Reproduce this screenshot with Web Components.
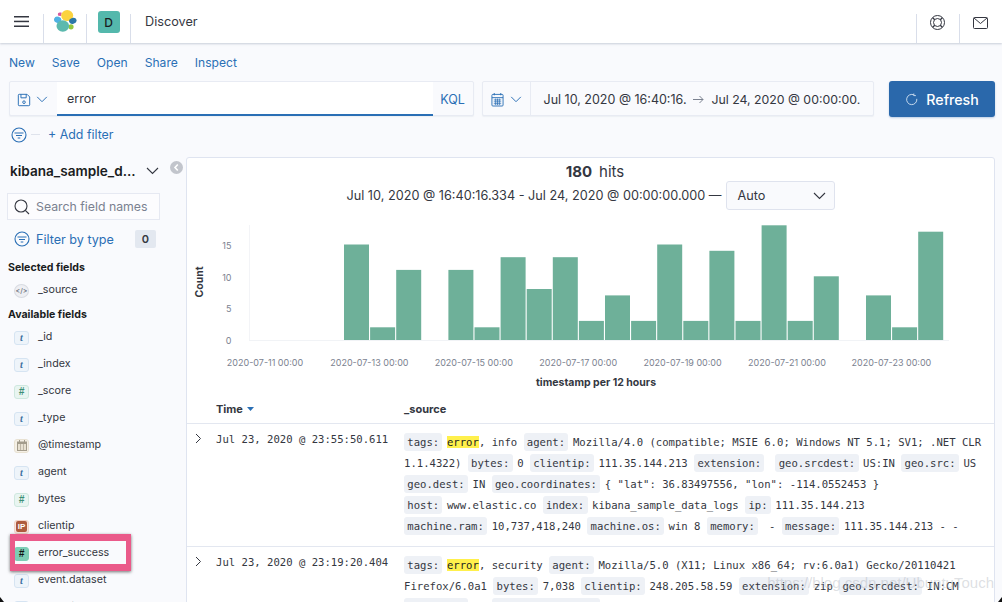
<!DOCTYPE html>
<html>
<head>
<meta charset="utf-8">
<style>
    html, body { margin: 0; height: 100%; overflow: hidden; background: #f9fafd; }
    body { font-family: Inter, "Liberation Sans", sans-serif; color: #343741; }
</style>
</head>
<body>
<kbn-app></kbn-app>

<script>
const ICONS = {
    save: '<svg width="14" height="14" viewBox="0 0 16 16" fill="none" stroke="#2a6fb5" stroke-width="1.100"><path d="M2.500 1.500h9l3 3v9a1 1 0 0 1-1 1h-11a1 1 0 0 1-1-1v-11a1 1 0 0 1 1-1z"/><path d="M4.500 1.500v4h6v-4"/><circle cx="8" cy="10.500" r="1.500"/></svg>',
    chevron: '<svg width="12" height="7" viewBox="0 0 13 8" fill="none" stroke="#2a6fb5" stroke-width="1.100"><path d="M1 1l5.500 5.500L12 1"/></svg>',
    chevronDark: '<svg width="13" height="8" viewBox="0 0 13 8" fill="none" stroke="#343741" stroke-width="1.100"><path d="M1 1l5.500 5.500L12 1"/></svg>',
    filter: '<svg width="16" height="16" viewBox="0 0 16 16" fill="none" stroke="#2a6fb5" stroke-width="1.100"><circle cx="8" cy="8" r="7"/><path d="M3.500 6h9M5 8.500h6M6.700 11h2.600"/></svg>',
    calendar: '<svg width="13" height="15" viewBox="0 0 14 16" fill="none" stroke="#2a6fb5"><rect x="1" y="2.500" width="12" height="12.500" rx="1"/><path d="M1 6h12M3.500 1v2.500M10.500 1v2.500"/><path d="M3 8.500h8M3 10.500h8M3 12.500h8M5 7v7M7 7v7M9 7v7" stroke-width=".8"/></svg>',
    refresh: '<svg width="13" height="13" viewBox="0 0 14 14" fill="none" stroke="#cfe0f0" stroke-width="1"><path d="M9.700 2.100a5.500 5.500 0 1 0 3 4.200"/><path d="M9.500 .6v2.200h2.200" /></svg>',
    search: '<svg width="16" height="16" viewBox="0 0 16 16" fill="none" stroke="#343741" stroke-width="1.100"><circle cx="7" cy="7" r="6"/><path d="M11.300 11.300L15 15"/></svg>',
    collapse: '<svg width="13" height="13" viewBox="0 0 13 13"><circle cx="6.500" cy="6.500" r="6.500" fill="#c2c5cc"/><path d="M7.800 3.500L5 6.500l2.800 3" fill="none" stroke="#fff" stroke-width="1.600"/></svg>',
    expand: '<svg width="7" height="11" viewBox="0 0 7 11" fill="none" stroke="#343741" stroke-width="1"><path d="M1 1l4.500 4.500L1 10"/></svg>'
};

class KbnHeader extends HTMLElement {
    constructor() {
        super();
        this.attachShadow({ mode: 'open' });
        this.shadowRoot.innerHTML = `
        <style>
            :host {
                display: flex;
                height: 43px;
                background: #fff;
                box-shadow: 0 1px 2px rgba(152,162,179,.5);
                position: relative;
                z-index: 2;
                align-items: flex-end;
            }
            .cell {
                height: 29px;
                display: flex;
                align-items: flex-start;
                justify-content: center;
                border-right: 1px solid #d9deea;
                box-sizing: border-box;
            }
            .burger { width: 44px; }
            .logo { width: 43px; }
            .space { width: 44px; }
            .title { flex: 1; height: 43px; display: flex; align-items: center; padding: 0 0 1px 14px; font-size: 12.700px; color: #343741; box-sizing: border-box; }
            .right { border-right: none; border-left: 1px solid #d9deea; width: 43px; }
            .badge {
                width: 22px; height: 22px; margin-top: -3px; border-radius: 3px;
                background: #54b8ac; color: #1a1c21; font-size: 12px; font-weight: 500;
                display: flex; align-items: center; justify-content: center;
            }
            svg { display: block; }
        </style>
        <div class="cell burger"><svg style="margin-top:2px" width="15" height="11" viewBox="0 0 15 11" fill="#343741"><rect width="15" height="1.500"/><rect y="4.700" width="15" height="1.500"/><rect y="9.500" width="15" height="1.500"/></svg></div>
        <div class="cell logo"><svg style="margin-top:-4px" width="23" height="22" viewBox="0 0 23 22">
            <path d="M4 3.500c.5-1 2.500-1.300 3.700-.8l-.6 3.300-2.800-.3c-.5-.7-.6-1.500-.3-2.200z" fill="#d8599c"/>
            <ellipse cx="17" cy="16.800" rx="2.600" ry="2.600" fill="#93c83f"/>
            <ellipse cx="13.200" cy="5.600" rx="6" ry="5.500" fill="#fbd33f"/>
            <ellipse cx="3.700" cy="9.800" rx="3.700" ry="3.200" transform="rotate(20 3.700 9.800)" fill="#4fb2e3"/>
            <ellipse cx="18.800" cy="10.800" rx="3.800" ry="3" transform="rotate(-15 18.800 10.800)" fill="#2c78a8"/>
            <ellipse cx="8.800" cy="16" rx="6.300" ry="5.700" fill="#5cb9ae"/>
        </svg></div>
        <div class="cell space"><div class="badge">D</div></div>
        <div class="title">Discover</div>
        <div class="cell right"><svg style="margin:1px 2px 0 0" width="15" height="15" viewBox="0 0 15 15" fill="none" stroke="#343741" stroke-width="1"><circle cx="7.500" cy="7.500" r="7"/><circle cx="7.500" cy="7.500" r="4"/><path d="M2.700 2.700l2 2M12.300 2.700l-2 2M2.700 12.300l2-2M12.300 12.300l-2-2" stroke-width="1.300"/></svg></div>
        <div class="cell right"><svg style="margin:3px 1px 0 0" width="15" height="12" viewBox="0 0 15 12" fill="none" stroke="#343741" stroke-width="1"><rect x=".5" y=".5" width="14" height="11" rx="1"/><path d="M1 1l6.500 5.500L14 1"/></svg></div>
        `;
    }
}

class KbnTopNav extends HTMLElement {
    constructor() {
        super();
        this.attachShadow({ mode: 'open' });
        this.shadowRoot.innerHTML = `
        <style>
            :host { display: flex; gap: 17px; padding: 11px 0 0 9px; height: 27px; font-size: 12.100px; color: #2a6fb5; line-height: 17px; }
        </style>
        <span>New</span><span>Save</span><span>Open</span><span>Share</span><span>Inspect</span>
        `;
    }
}

class KbnQueryBar extends HTMLElement {
    constructor() {
        super();
        this.attachShadow({ mode: 'open' });
        this.shadowRoot.innerHTML = `
        <style>
            :host { display: flex; padding: 0 7px 0 9px; height: 36px; font-size: 12.500px; }
            .box { display: flex; height: 35px; border: 1px solid #e8ebf3; border-radius: 2px; box-sizing: border-box; background: #f9fafd; box-shadow: 0 1px 1px rgba(152,162,179,.12); }
            .query { width: 465px; }
            .prep { width: 47px; display: flex; align-items: center; gap: 5px; padding: 2px 0 0 7px; box-sizing: border-box; flex: none; }
            .input { flex: 1; background: #fff; padding: 1px 0 0 10px; display: flex; align-items: center; border-bottom: 2px solid #2a6fb5; height: 34px; box-sizing: border-box; }
            .kql { width: 40px; color: #2a6fb5; display: flex; align-items: center; justify-content: center; flex: none; font-size: 12.500px; padding-top: 1px; box-sizing: border-box; }
            .date { width: 393px; margin-left: 8px; }
            .cal { width: 48px; border-right: 1px solid #e8ebf3; box-sizing: border-box; display: flex; align-items: center; gap: 6px; padding: 2px 0 0 8px; flex: none; }
            .range { flex: 1; display: flex; align-items: center; gap: 6px; padding: 1px 0 0 13px; font-size: 12.500px; white-space: nowrap; }
            .range .end { font-size: 12.300px; margin-left: 2px; }
            .refresh {
                width: 106px; height: 36px; margin-left: 15px; background: #2a68ab; color: #fff; border-radius: 3px;
                display: flex; align-items: center; justify-content: center; gap: 8px; font-size: 14.200px; font-weight: 500;
                box-shadow: 0 1px 2px rgba(42,104,171,.3);
            }
            svg { display: block; flex: none; }
        </style>
        <div class="box query">
            <div class="prep">${ICONS.save}${ICONS.chevron}</div>
            <div class="input">error</div>
            <div class="kql">KQL</div>
        </div>
        <div class="box date">
            <div class="cal">${ICONS.calendar}${ICONS.chevron}</div>
            <div class="range"><span>Jul 10, 2020 @ 16:40:16.</span><svg width="11" height="9" viewBox="0 0 11 9" fill="none" stroke="#7b8290"><path d="M0 4.500h10M6.500 1l3.500 3.500L6.500 8"/></svg><span class="end">Jul 24, 2020 @ 00:00:00.</span></div>
        </div>
        <div class="refresh">${ICONS.refresh}<span>Refresh</span></div>
        `;
    }
}

class KbnFilterBar extends HTMLElement {
    constructor() {
        super();
        this.attachShadow({ mode: 'open' });
        this.shadowRoot.innerHTML = `
        <style>
            :host { display: flex; align-items: center; height: 35px; padding: 0 0 0 11px; font-size: 12.400px; color: #2a6fb5; box-sizing: border-box; }
            .dash { width: 9px; height: 1px; background: #dfe3ec; margin: 0 8px 0 4px; }
        </style>
        ${ICONS.filter}<span class="dash"></span><span>+ Add filter</span>
        `;
    }
}

class KbnFieldRow extends HTMLElement {
    connectedCallback() {
        const type = this.getAttribute('type');
        const name = this.getAttribute('name');
        const token = {
            t: ['t', '#eef4fa', '#d6e4f2', '#3a6f9f', 'font:italic 700 10px \'Liberation Serif\',serif'],
            n: ['#', '#e9f5f1', '#cfe8df', '#3d8f76', 'font:italic 700 10px \'Liberation Sans\',sans-serif'],
            k: ['#', '#7dcdb5', '#7dcdb5', '#111', 'font:italic 700 10px \'Liberation Sans\',sans-serif'],
            ip: ['IP', '#f6e4de', '#f2d2c6', '#fff', ''],
            s: ['</>', '#eeeff3', '#d8dbe2', '#6a717d', 'font:500 7px Inter,sans-serif'],
            d: ['', '#f5f0e6', '#e8e1d2', '#8d8676', '']
        }[type];
        let glyph = `<span style="${token[4]};color:${token[3]}">${token[0].replace('<', '&lt;')}</span>`;
        if (type === 'ip') {
            glyph = '<span class="ipb">IP</span>';
        }
        if (type === 'd') {
            glyph = '<svg width="10" height="11" viewBox="0 0 10 11" fill="#a39c8c"><path d="M0 1.500h10V11H0z"/><path d="M2 0h1v2H2zM7 0h1v2H7z"/><path d="M1 4h2.300v6H1zM3.900 4h2.300v6H3.900zM6.800 4h2.200v6H6.800z" fill="#e8e1d2"/></svg>';
        }
        this.attachShadow({ mode: 'open' });
        this.shadowRoot.innerHTML = `
        <style>
            :host { display: flex; align-items: center; height: 27px; padding-left: 14px; font-size: 10.700px; color: #343741; }
            .tok {
                width: 15px; height: 14px; box-sizing: border-box; margin-right: 9px; margin-top: 2px;
                background: ${token[1]}; border: 1px solid ${token[2]}; border-radius: ${type === 's' ? '50%' : '3px'};
                display: flex; align-items: center; justify-content: center; flex: none;
            }
            .ipb { background: #ae5a3d; color: #fff; font: 700 8px "Liberation Sans", sans-serif; padding: 1px 1.500px; border-radius: 2px; line-height: 9px; }
        </style>
        <span class="tok">${glyph}</span><span>${name}</span>
        `;
    }
}

class KbnSidebar extends HTMLElement {
    constructor() {
        super();
        this.attachShadow({ mode: 'open' });
        this.shadowRoot.innerHTML = `
        <style>
            :host { display: block; width: 186px; flex: none; position: relative; box-sizing: border-box; }
            .index { display: flex; align-items: center; height: 28px; padding-left: 10px; font-size: 13.600px; font-weight: 600; color: #1a1c21; margin-top: 5px; }
            .index span { width: 136px; white-space: nowrap; }
            .collapse { position: absolute; left: 170px; top: 9px; }
            .search {
                margin: 8px 0 0 7px; width: 153px; height: 27px; box-sizing: border-box; border: 1px solid #e6e9f2; background: #fcfcfe;
                display: flex; align-items: center; gap: 6px; padding-left: 6px; font-size: 12.300px; color: #7a8190; white-space: nowrap;
            }
            .ftype { display: flex; align-items: center; height: 32px; margin-top: 3px; padding-left: 14px; font-size: 12.600px; color: #2a6fb5; gap: 6px; }
            .count { margin-left: 15px; width: 21px; height: 18px; background: #e3e8f0; border-radius: 2px; font-size: 11px; font-weight: 600; color: #343741; display: flex; align-items: center; justify-content: center; }
            h3 { margin: 0; padding-left: 8px; font-size: 10.600px; font-weight: 700; color: #1a1c21; line-height: 14px; }
            .sel { margin-top: 6px; }
            .avail { margin-top: 5px; }
            .list { margin-top: 1px; }
            .sellist { height: 27px; padding-top: 1px; }
            svg { display: block; flex: none; }
        </style>
        <div class="index"><span>kibana_sample_d...</span>${ICONS.chevronDark}</div>
        <div class="collapse">${ICONS.collapse}</div>
        <div class="search">${ICONS.search}<span>Search field names</span></div>
        <div class="ftype">${ICONS.filter}<span>Filter by type</span><span class="count">0</span></div>
        <h3 class="sel">Selected fields</h3>
        <div class="sellist"><kbn-field-row type="s" name="_source"></kbn-field-row></div>
        <h3 class="avail">Available fields</h3>
        <div class="list">
            <kbn-field-row type="t" name="_id"></kbn-field-row>
            <kbn-field-row type="t" name="_index"></kbn-field-row>
            <kbn-field-row type="n" name="_score"></kbn-field-row>
            <kbn-field-row type="t" name="_type"></kbn-field-row>
            <kbn-field-row type="d" name="@timestamp"></kbn-field-row>
            <kbn-field-row type="t" name="agent"></kbn-field-row>
            <kbn-field-row type="n" name="bytes"></kbn-field-row>
            <kbn-field-row type="ip" name="clientip"></kbn-field-row>
            <kbn-field-row type="k" name="error_success"></kbn-field-row>
            <kbn-field-row type="t" name="event.dataset"></kbn-field-row>
            <kbn-field-row type="t" name="extension"></kbn-field-row>
        </div>
        `;
    }
}

class KbnChart extends HTMLElement {
    constructor() {
        super();
        this.attachShadow({ mode: 'open' });
        const counts = [15, 2, 11, 0, 11, 2, 13, 8, 13, 3, 7, 3, 15, 3, 14, 3, 18, 3, 10, 0, 7, 2, 17];
        // svg origin sits at page x=187, y=211
        const base = 130;
        const bars = counts.map((c, i) => c === 0 ? '' :
            `<rect x="${(157 + i * 26.1).toFixed(1)}" y="${(base - c * 6.37).toFixed(1)}" width="25" height="${(c * 6.37).toFixed(1)}" fill="#6eb099"/>`).join('');
        const yTicks = [0, 5, 10, 15].map(v =>
            `<text x="44.5" y="${base - v * 6.37 + 4.2}" text-anchor="end" class="tick">${v}</text>`).join('');
        const xTicks = ['11', '13', '15', '17', '19', '21', '23'].map((d, i) =>
            `<text x="${78 + i * 104.4}" y="156" text-anchor="middle" class="tick">2020-07-${d} 00:00</text>`).join('');
        this.shadowRoot.innerHTML = `
        <style>
            :host { display: block; height: 180px; }
            svg { display: block; }
            text { font-family: Inter, "Liberation Sans", sans-serif; }
            .tick { font-size: 9px; fill: #7b8290; }
            .label { font-size: 10.500px; font-weight: 700; fill: #343741; }
        </style>
        <svg width="807" height="180" viewBox="0 0 807 180">
            <rect x="62" y="15" width="1" height="115" fill="#f3f4f7"/>
            <rect x="62" y="130" width="700" height="1" fill="#f1f3f6"/>
            ${bars}
            ${yTicks}
            ${xTicks}
            <text transform="translate(16 72) rotate(-90)" class="label" text-anchor="middle">Count</text>
            <text x="409" y="176" class="label" text-anchor="middle">timestamp per 12 hours</text>
        </svg>
        `;
    }
}

class KbnDocRow extends HTMLElement {
    connectedCallback() {
        const time = this.getAttribute('time');
        this.attachShadow({ mode: 'open' });
        this.shadowRoot.innerHTML = `
        <style>
            :host { display: flex; border-top: 1px solid #e3e7f0; height: 123px; box-sizing: border-box; font: 10.600px "DejaVu Sans Mono", monospace; color: #343741; overflow: hidden; }
            .exp { width: 29px; padding: 9px 0 0 8px; box-sizing: border-box; flex: none; }
            .time { width: 188px; padding-top: 9px; flex: none; line-height: 13px; white-space: nowrap; }
            .src { flex: 1; padding: 8px 9px 0 0; line-height: 21px; white-space: nowrap; }
        </style>
        <div class="exp">${ICONS.expand}</div>
        <div class="time">${time}</div>
        <div class="src"><slot></slot></div>
        `;
    }
}

// field name chip inside a document row
class KbnKey extends HTMLElement {
    constructor() {
        super();
        this.attachShadow({ mode: 'open' });
        this.shadowRoot.innerHTML = `
        <style>
            :host { display: inline-block; background: #eef1f6; border-radius: 3px; padding: 0 3.300px; line-height: 18px; margin-right: 4.500px; }
        </style>
        <slot></slot>
        `;
    }
}

class KbnDiscover extends HTMLElement {
    constructor() {
        super();
        this.attachShadow({ mode: 'open' });
        this.shadowRoot.innerHTML = `
        <style>
            :host { display: block; flex: none; width: 809px; height: 500px; margin-top: 5px; box-sizing: border-box; background: #fff; border: 1px solid #dfe4f0; border-radius: 3px 3px 0 0; overflow: hidden; }
            .hits { height: 26px; display: flex; justify-content: center; align-items: center; gap: 7px; font-size: 15px; padding-left: 9px; color: #343741; }
            .hits b { font-weight: 700; }
            .range { display: flex; height: 30px; margin-top: -4px; justify-content: center; align-items: center; gap: 4px; font-size: 12.700px; position: relative; }
            .sel { width: 109px; height: 29px; box-sizing: border-box; border: 1px solid #dfe3ee; border-radius: 3px; background: #f9fafd; display: flex; align-items: center; justify-content: space-between; padding: 1px 8px 0 11px; font-size: 12.700px; }
            .head { display: flex; height: 33px; font-size: 11px; font-weight: 700; align-items: center; padding-top: 5px; color: #343741; box-sizing: border-box; }
            .head .t { width: 188px; margin-left: 29px; display: flex; align-items: center; gap: 4px; }
        </style>
        <div class="hits"><b>180</b><span>hits</span></div>
        <div class="range"><span>Jul 10, 2020 @ 16:40:16.334 - Jul 24, 2020 @ 00:00:00.000 —</span><div class="sel"><span>Auto</span>${ICONS.chevronDark}</div></div>
        <kbn-chart></kbn-chart>
        <div class="head"><span class="t">Time <svg width="7" height="4" viewBox="0 0 7 4"><path d="M0 0h7L3.500 4z" fill="#2a6fb5"/></svg></span><span>_source</span></div>
        <slot></slot>
        `;
    }
}

class KbnApp extends HTMLElement {
    constructor() {
        super();
        this.attachShadow({ mode: 'open' });
        const hl = '<mark style="background:#fff04c;color:#1a1c21">error</mark>';
        this.shadowRoot.innerHTML = `
        <style>
            :host { display: block; width: 1002px; height: 602px; position: relative; overflow: hidden; }
            .main { display: flex; }
            .mark {
                position: absolute; left: 10px; top: 534px; width: 121px; height: 37px; box-sizing: border-box;
                border-style: solid; border-color: #ea5a8a; border-width: 7px 5px; box-shadow: 0 1px 3px rgba(0,0,0,.55);
                pointer-events: none;
            }
            .wm {
                position: absolute; right: 8px; top: 574px; font: 15px "Liberation Sans", sans-serif; color: rgba(170,175,185,.4); white-space: nowrap;
            }
            .corner { position: absolute; bottom: 0; width: 4px; height: 5px; background: #111; }
            .corner.l { left: 0; clip-path: polygon(0 0, 100% 100%, 0 100%); }
            .corner.r { right: 0; clip-path: polygon(100% 0, 100% 100%, 0 100%); }
        </style>
        <kbn-header></kbn-header>
        <kbn-top-nav></kbn-top-nav>
        <kbn-query-bar></kbn-query-bar>
        <kbn-filter-bar></kbn-filter-bar>
        <div class="main">
            <kbn-sidebar></kbn-sidebar>
            <kbn-discover>
                <kbn-doc-row time="Jul 23, 2020 @ 23:55:50.611">
                    <kbn-key>tags:</kbn-key>${hl}, info <kbn-key>agent:</kbn-key>Mozilla/4.0 (compatible; MSIE 6.0; Windows NT 5.1; SV1; .NET CLR<br>
                    1.1.4322) <kbn-key>bytes:</kbn-key>0 <kbn-key>clientip:</kbn-key>111.35.144.213 <kbn-key>extension:</kbn-key>&nbsp;<kbn-key>geo.srcdest:</kbn-key>US:IN <kbn-key>geo.src:</kbn-key>US<br>
                    <kbn-key>geo.dest:</kbn-key>IN <kbn-key>geo.coordinates:</kbn-key>{ "lat": 36.83497556, "lon": -114.0552453 }<br>
                    <kbn-key>host:</kbn-key>www.elastic.co <kbn-key>index:</kbn-key>kibana_sample_data_logs <kbn-key>ip:</kbn-key>111.35.144.213<br>
                    <kbn-key>machine.ram:</kbn-key>10,737,418,240 <kbn-key>machine.os:</kbn-key>win 8 <kbn-key>memory:</kbn-key>&nbsp;- <kbn-key>message:</kbn-key>111.35.144.213 - -
                </kbn-doc-row>
                <kbn-doc-row time="Jul 23, 2020 @ 23:19:20.404">
                    <kbn-key>tags:</kbn-key>${hl}, security <kbn-key>agent:</kbn-key>Mozilla/5.0 (X11; Linux x86_64; rv:6.0a1) Gecko/20110421<br>
                    Firefox/6.0a1 <kbn-key>bytes:</kbn-key>7,038 <kbn-key>clientip:</kbn-key>248.205.58.59 <kbn-key>extension:</kbn-key>zip <kbn-key>geo.srcdest:</kbn-key>IN:CM<br>
                    <kbn-key>geo.dest:</kbn-key>CM <kbn-key>geo.coordinates:</kbn-key>{ "lat": 40.0, "lon": -100.0 }
                </kbn-doc-row>
            </kbn-discover>
        </div>
        <div class="mark"></div>
        <div class="wm">https://blog.csdn.net/UbuntuTouch</div>
        <div class="corner l"></div>
        <div class="corner r"></div>
        `;
    }
}

customElements.define('kbn-header', KbnHeader);
customElements.define('kbn-top-nav', KbnTopNav);
customElements.define('kbn-query-bar', KbnQueryBar);
customElements.define('kbn-filter-bar', KbnFilterBar);
customElements.define('kbn-field-row', KbnFieldRow);
customElements.define('kbn-sidebar', KbnSidebar);
customElements.define('kbn-chart', KbnChart);
customElements.define('kbn-doc-row', KbnDocRow);
customElements.define('kbn-key', KbnKey);
customElements.define('kbn-discover', KbnDiscover);
customElements.define('kbn-app', KbnApp);
</script>
</body>
</html>
